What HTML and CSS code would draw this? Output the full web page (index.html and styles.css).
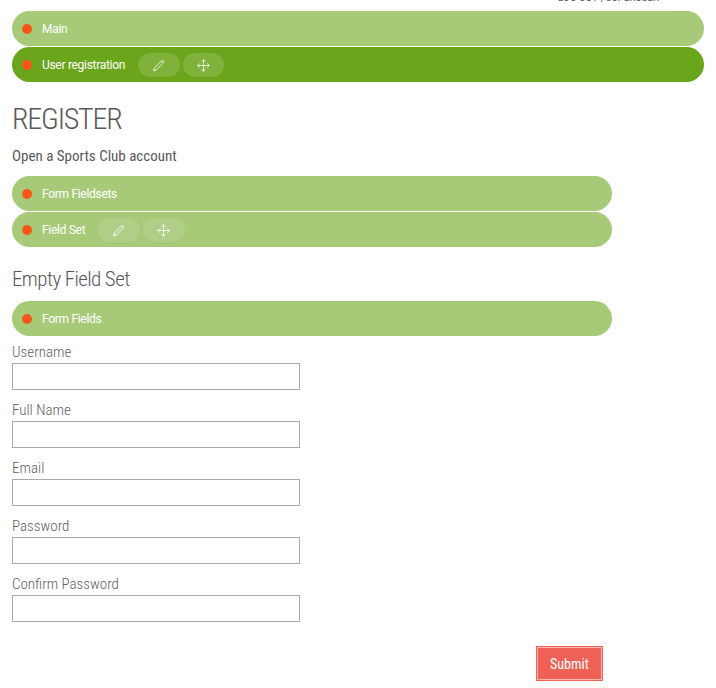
FILE: index.html
```html
<!DOCTYPE html>
<html lang="en">
<head>
<meta charset="utf-8">
<title>Register</title>
<link rel="stylesheet" href="styles.css">
</head>
<body>
<svg width="0" height="0" class="defs">
  <symbol id="pencil" viewBox="0 0 13 13"><path d="M1.4 12l.7-2.7 7.6-7.5q.8-.6 1.6.2t.2 1.6L4 11.3zM9.2 2.5l1.7 1.7M2.1 9.5l1.9 1.8"/></symbol>
  <symbol id="move" viewBox="0 0 13 13"><path d="M6.5 .7v11.6M.7 6.5h11.6M4.4 2.8l2.1-2.1 2.1 2.1M4.4 10.2l2.1 2.1 2.1-2.1M2.8 4.4L.7 6.5l2.1 2.1M10.2 4.4l2.1 2.1-2.1 2.1"/></symbol>
</svg>
<header class="account">LOG OUT | SUPERUSER</header>
<main>
  <div class="bar"><i class="dot"></i><span>Main</span></div>
  <div class="bar active"><i class="dot"></i><span class="name-user">User registration</span>
    <div class="tools"><a class="pill"><svg><use href="#pencil"/></svg></a><a class="pill"><svg><use href="#move"/></svg></a></div>
  </div>
  <section class="content">
    <h1>REGISTER</h1>
    <p class="lead">Open a Sports Club account</p>
    <div class="bar"><i class="dot"></i><span>Form Fieldsets</span></div>
    <div class="bar"><i class="dot"></i><span class="name-set">Field Set</span>
      <div class="tools"><a class="pill"><svg><use href="#pencil"/></svg></a><a class="pill"><svg><use href="#move"/></svg></a></div>
    </div>
    <h2>Empty Field Set</h2>
    <div class="bar"><i class="dot"></i><span>Form Fields</span></div>
    <form>
      <label>Username<input type="text"></label>
      <label>Full Name<input type="text"></label>
      <label>Email<input type="text"></label>
      <label>Password<input type="password"></label>
      <label>Confirm Password<input type="password"></label>
      <button type="button">Submit</button>
    </form>
  </section>
</main>
</body>
</html>
```
FILE: styles.css
```css
* { box-sizing: border-box; }
html { overflow: hidden; }
body { margin: 0; background: #fff; color: #58585a; font-family: "Roboto Condensed", Roboto, sans-serif; }
.defs { display: block; }
.account { height: 11px; margin: -8px 57px 8px 0; text-align: right; font-size: 11px; line-height: 12px; letter-spacing: .1px; }
main { padding: 0 12px; }
.bar { display: flex; align-items: center; height: 35px; margin-bottom: 1px; padding-left: 10px; border-radius: 18px; background: #a7ca79; color: #fff; font: 12px Roboto, sans-serif; letter-spacing: -.3px; }
.active { background: #6aa51b; }
.dot { width: 10px; height: 10px; margin-right: 10px; border-radius: 50%; background: #fa5519; }
.name-user { width: 96px; }
.name-set { width: 56px; }
.tools { display: flex; gap: 3px; margin-top: 1px; }
.pill { display: flex; align-items: center; justify-content: center; width: 42px; height: 24px; padding: 1px 1px 0 0; border-radius: 12px; background: rgba(255,255,255,.14); }
.active .pill + .pill { width: 41px; padding-right: 0; }
.content > .bar .pill { background: rgba(255,255,255,.1); }
.pill svg { width: 13px; height: 13px; fill: none; stroke: #fff; stroke-width: .8; }
.content { width: 600px; }
h1 { margin: 0; padding-top: 18px; font-size: 30px; font-weight: 300; line-height: 36px; letter-spacing: -1.2px; }
.lead { margin: 9px 0 10px; font-size: 15px; line-height: 20px; }
h2 { margin: 19px 0 9px; font-size: 21px; font-weight: 300; line-height: 26px; letter-spacing: -.6px; }
form { padding-top: 5px; }
label { display: block; height: 58px; color: #606060; font-size: 15px; font-weight: 300; line-height: 21px; }
input { display: block; width: 288px; height: 27px; border: 1px solid #aaa; background: #fff; }
button { display: block; width: 67px; height: 35px; margin: 14px 9px 0 auto; padding: 0; border: 1px solid #ef6155; outline: 1px solid #f7b8b2; outline-offset: -2px; background: #ef6155; color: #fff; font: 14px "Roboto Condensed", sans-serif; }
```
